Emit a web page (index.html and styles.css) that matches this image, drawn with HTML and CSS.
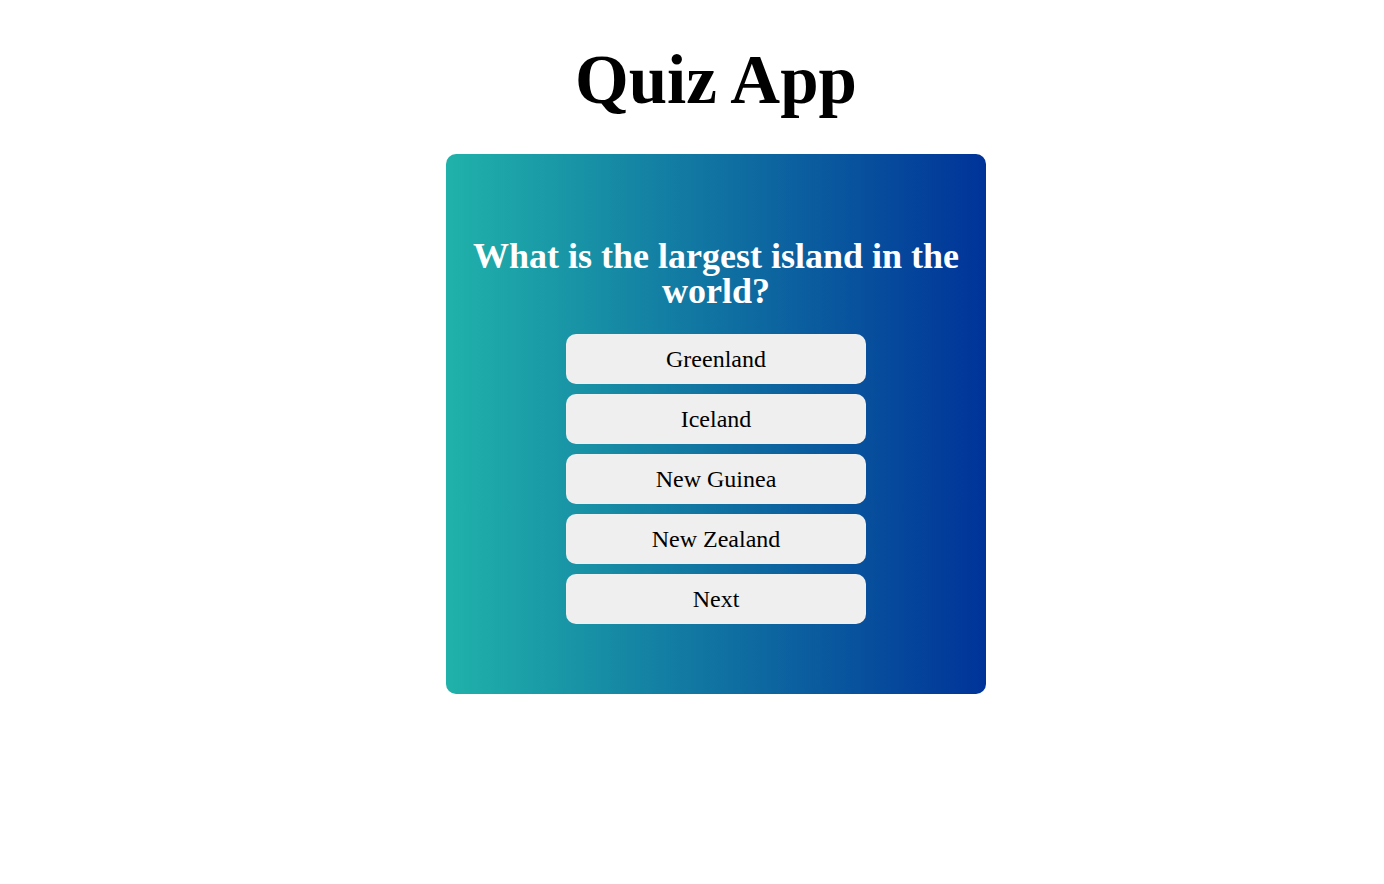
FILE: index.html
```html
<!DOCTYPE html>
<html lang="en">
<head>
<meta charset="utf-8">
<title>Quiz App</title>
<link rel="stylesheet" href="styles.css">
</head>
<body>
<h1 class="title">Quiz App</h1>
<main class="quiz">
  <h2 class="question">What is the largest island in the world?</h2>
  <div class="answers">
    <button class="btn">Greenland</button>
    <button class="btn">Iceland</button>
    <button class="btn">New Guinea</button>
    <button class="btn">New Zealand</button>
    <button class="btn">Next</button>
  </div>
</main>
</body>
</html>
```
FILE: styles.css
```css
* { box-sizing: border-box; }
body {
  margin: 0;
  padding-left: 48px;
  font-family: "Liberation Serif", "DejaVu Serif", serif;
  background: #fff;
  color: #000;
  display: flex;
  flex-direction: column;
  align-items: center;
}
.title {
  margin: 42px 0 36px;
  font-size: 69px;
  line-height: 76px;
  font-weight: bold;
}
.quiz {
  width: 540px;
  height: 540px;
  border-radius: 10px;
  background: linear-gradient(to right, #20b2aa, #003399);
  display: flex;
  flex-direction: column;
  align-items: center;
  padding: 85px 20px 0;
}
.question {
  margin: 0 0 25px;
  color: #fff;
  font-size: 36px;
  line-height: 35px;
  text-align: center;
  font-weight: bold;
}
.answers {
  display: flex;
  flex-direction: column;
  gap: 10px;
}
.btn {
  width: 300px;
  height: 50px;
  border: none;
  border-radius: 10px;
  background: #efefef;
  font-family: inherit;
  font-size: 24px;
  color: #000;
}
```
